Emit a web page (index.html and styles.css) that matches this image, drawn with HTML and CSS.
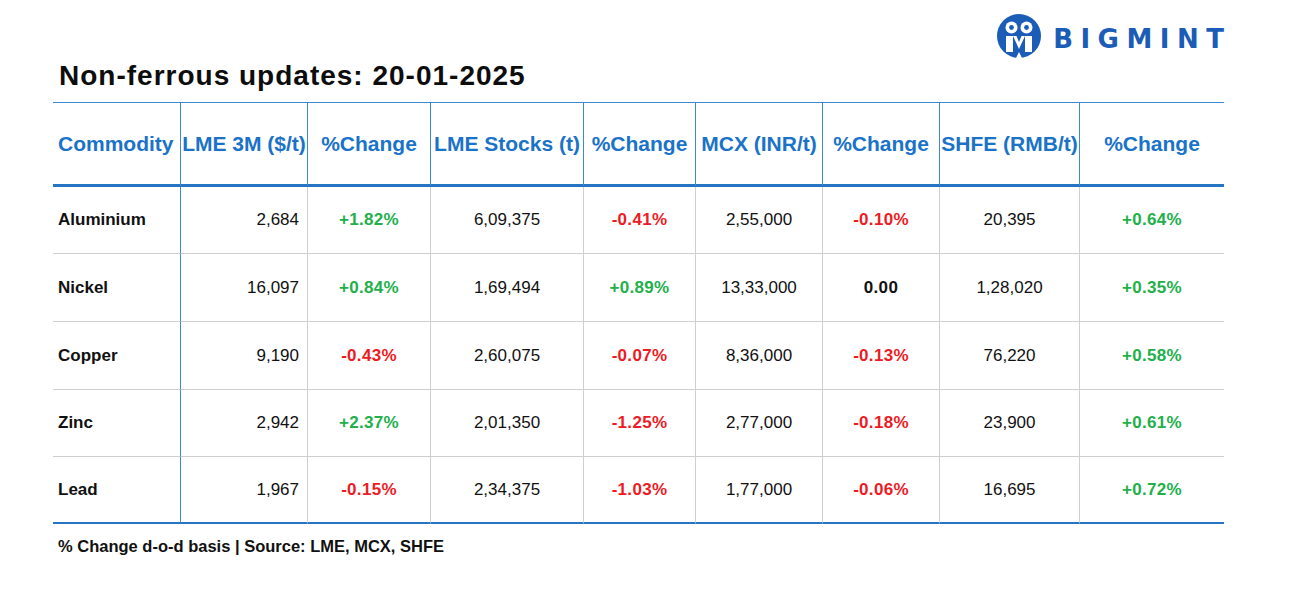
FILE: index.html
```html
<!DOCTYPE html>
<html>
<head>
<meta charset="utf-8">
<link rel="stylesheet" href="styles.css">
</head>
<body>
<div class="page">
  <div class="brand">
    <svg class="brand-icon" width="44" height="44" viewBox="0 0 44 44">
      <circle cx="22" cy="22" r="22" fill="#1b5cb7"/>
      <circle cx="14.5" cy="13.5" r="6" fill="#fff"/>
      <circle cx="29.5" cy="13.5" r="6" fill="#fff"/>
      <circle cx="14.5" cy="13.5" r="2.4" fill="#1b5cb7"/>
      <circle cx="29.5" cy="13.5" r="2.4" fill="#1b5cb7"/>
      <path d="M9 22 h7 v16 h-7z" fill="#fff"/>
      <path d="M28 22 h7 v16 h-7z" fill="#fff"/>
      <path d="M16 22 L22 35 L28 22 h-3.5 L22 28 L19.5 22z" fill="#fff"/>
      <path d="M19 44 L22 38 L25 44z" fill="#fff"/>
    </svg>
    <span class="brand-name">BIGMINT</span>
  </div>
  <h1 class="title">Non-ferrous updates: 20-01-2025</h1>
  <table class="grid">
    <colgroup>
      <col style="width:128px"><col style="width:127px"><col style="width:123px"><col style="width:153px"><col style="width:112px"><col style="width:127px"><col style="width:117px"><col style="width:140px"><col style="width:144px">
    </colgroup>
    <thead>
      <tr>
        <th class="first">Commodity</th>
        <th>LME 3M ($/t)</th>
        <th>%Change</th>
        <th>LME Stocks (t)</th>
        <th>%Change</th>
        <th>MCX (INR/t)</th>
        <th>%Change</th>
        <th>SHFE (RMB/t)</th>
        <th class="last">%Change</th>
      </tr>
    </thead>
    <tbody>
      <tr>
        <td class="name">Aluminium</td><td class="lme">2,684</td><td class="pct up">+1.82%</td><td>6,09,375</td><td class="pct down">-0.41%</td><td>2,55,000</td><td class="pct down">-0.10%</td><td>20,395</td><td class="pct up last">+0.64%</td>
      </tr>
      <tr>
        <td class="name">Nickel</td><td class="lme">16,097</td><td class="pct up">+0.84%</td><td>1,69,494</td><td class="pct up">+0.89%</td><td>13,33,000</td><td class="pct flat">0.00</td><td>1,28,020</td><td class="pct up last">+0.35%</td>
      </tr>
      <tr>
        <td class="name">Copper</td><td class="lme">9,190</td><td class="pct down">-0.43%</td><td>2,60,075</td><td class="pct down">-0.07%</td><td>8,36,000</td><td class="pct down">-0.13%</td><td>76,220</td><td class="pct up last">+0.58%</td>
      </tr>
      <tr>
        <td class="name">Zinc</td><td class="lme">2,942</td><td class="pct up">+2.37%</td><td>2,01,350</td><td class="pct down">-1.25%</td><td>2,77,000</td><td class="pct down">-0.18%</td><td>23,900</td><td class="pct up last">+0.61%</td>
      </tr>
      <tr>
        <td class="name">Lead</td><td class="lme">1,967</td><td class="pct down">-0.15%</td><td>2,34,375</td><td class="pct down">-1.03%</td><td>1,77,000</td><td class="pct down">-0.06%</td><td>16,695</td><td class="pct up last">+0.72%</td>
      </tr>
    </tbody>
  </table>
  <p class="note">% Change d-o-d basis | Source: LME, MCX, SHFE</p>
</div>
</body>
</html>
```

FILE: styles.css
```css
* { box-sizing: border-box; }
html, body { margin: 0; padding: 0; background: #fff; }
body { font-family: "Liberation Sans", Arial, sans-serif; color: #111; }

.page {
  width: 1171px;
  margin-left: 53px;
  padding-top: 15px;
}

.brand {
  display: flex;
  justify-content: flex-end;
  align-items: center;
  gap: 12px;
  height: 44px;
}
.brand-icon { display: block; flex: none; margin-top: -2px; }
.brand-name {
  font-family: "DejaVu Sans", sans-serif;
  font-weight: bold;
  font-size: 26px;
  letter-spacing: 7.5px;
  margin-right: -7.5px;
  color: #1b5cb7;
  line-height: 1;
  padding-top: 3px;
}

.title {
  margin: 0;
  padding-left: 6px;
  font-size: 28px;
  letter-spacing: 1px;
  font-weight: bold;
  color: #0d0d0d;
  line-height: 34px;
  height: 43px;
}

.grid {
  width: 1171px;
  table-layout: fixed;
  border-collapse: separate;
  border-spacing: 0;
}

.grid th {
  height: 85px;
  padding: 0;
  border-top: 1px solid #3d8ad2;
  border-right: 1px solid #3d8ad2;
  border-bottom: 3px solid #2674c4;
  color: #1a73c8;
  font-size: 21px;
  font-weight: bold;
  text-align: center;
  vertical-align: middle;
  white-space: nowrap;
}
.grid th.first { text-align: left; padding-left: 5px; }
.grid th.last { border-right: none; }

.grid td {
  height: 67px;
  padding: 0;
  border-right: 1px solid #cfcfcf;
  border-bottom: 1px solid #cfcfcf;
  font-size: 17px;
  text-align: center;
  vertical-align: middle;
  color: #111;
  white-space: nowrap;
}
.grid tbody tr:nth-child(2) td,
.grid tbody tr:nth-child(3) td { height: 68px; }
.grid td.name {
  text-align: left;
  padding-left: 5px;
  font-weight: bold;
  border-right-color: #3d8ad2;
}
.grid td.lme { text-align: right; padding-right: 8px; }
.grid td.last { border-right: none; }
.grid tbody tr:last-child td { border-bottom: 2px solid #2674c4; height: 67px; }

.grid td.pct { font-weight: bold; letter-spacing: 0.3px; }
.grid td.up { color: #22b04a; }
.grid td.down { color: #ee1b24; }
.grid td.flat { color: #111; }

.note {
  margin: 13px 0 0 5px;
  font-size: 16.5px;
  font-weight: bold;
  color: #111;
}
```
